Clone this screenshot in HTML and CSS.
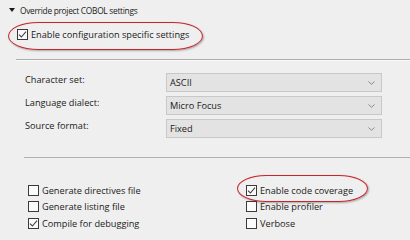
FILE: index.html
```html
<!DOCTYPE html>
<html>
<head>
<meta charset="utf-8">
<link rel="stylesheet" href="styles.css">
</head>
<body>
<div class="page">
  <div class="header">
    <svg class="tri" width="6" height="4" viewBox="0 0 6 4"><path d="M0 0H6L3 4Z" fill="#1a1a1a"/></svg>
    <span>Override project COBOL settings</span>
  </div>
  <div class="cfg">
    <label class="opt hl hl-cfg">
      <span class="cb"><svg width="9" height="9" viewBox="0 0 9 9"><path d="M1 4.6 L3.4 7 L8 1.6" fill="none" stroke="#404040" stroke-width="1.1"/></svg></span>
      <span>Enable configuration specific settings</span>
    </label>
  </div>
  <div class="group">
    <div class="form">
      <div class="lbl">Character set:</div>
      <div class="sel"><span>ASCII</span><svg class="chev" width="7" height="4" viewBox="0 0 7 4"><path d="M0.5 0.5 L3.5 3.3 L6.5 0.5" fill="none" stroke="#8a8a8a" stroke-width="1"/></svg></div>
      <div class="lbl">Language dialect:</div>
      <div class="sel"><span>Micro Focus</span><svg class="chev" width="7" height="4" viewBox="0 0 7 4"><path d="M0.5 0.5 L3.5 3.3 L6.5 0.5" fill="none" stroke="#8a8a8a" stroke-width="1"/></svg></div>
      <div class="lbl">Source format:</div>
      <div class="sel"><span>Fixed</span><svg class="chev" width="7" height="4" viewBox="0 0 7 4"><path d="M0.5 0.5 L3.5 3.3 L6.5 0.5" fill="none" stroke="#8a8a8a" stroke-width="1"/></svg></div>
    </div>
    <div class="sep"></div>
    <div class="opts">
      <label class="opt"><span class="cb"></span><span>Generate directives file</span></label>
      <label class="opt hl hl-cov"><span class="cb"><svg width="9" height="9" viewBox="0 0 9 9"><path d="M1 4.6 L3.4 7 L8 1.6" fill="none" stroke="#404040" stroke-width="1.1"/></svg></span><span>Enable code coverage</span></label>
      <label class="opt"><span class="cb"></span><span>Generate listing file</span></label>
      <label class="opt"><span class="cb"></span><span>Enable profiler</span></label>
      <label class="opt"><span class="cb"><svg width="9" height="9" viewBox="0 0 9 9"><path d="M1 4.6 L3.4 7 L8 1.6" fill="none" stroke="#404040" stroke-width="1.1"/></svg></span><span>Compile for debugging</span></label>
      <label class="opt"><span class="cb"></span><span>Verbose</span></label>
    </div>
  </div>
</div>
</body>
</html>
```
FILE: styles.css
```css
html, body {
  margin: 0;
  padding: 0;
  background: #efefef;
}
.page {
  width: 410px;
  height: 240px;
  overflow: hidden;
  font-family: "Open Sans", "Noto Sans", sans-serif;
  font-size: 9.2px;
  color: #1a1a1a;
}
.header {
  display: flex;
  align-items: center;
  height: 14px;
  padding: 3px 0 0 9px;
  font-size: 8.4px;
  letter-spacing: -0.3px;
}
.tri {
  margin-right: 5px;
}
.cfg {
  padding: 9px 0 0 17px;
  height: 42px;
  box-sizing: border-box;
}
.opt {
  display: flex;
  align-items: center;
  gap: 3px;
  height: 16px;
  position: relative;
  justify-self: start;
}
.cfg .opt {
  display: inline-flex;
}
.cb {
  width: 11px;
  height: 11px;
  box-sizing: border-box;
  border: 1px solid #3a3a3a;
  background: #fbfbfb;
  display: flex;
  align-items: center;
  justify-content: center;
  flex: none;
}
.hl::before {
  content: "";
  position: absolute;
  border: 1.6px solid #c9252b;
  border-radius: 30px / 14px;
  box-shadow: 1px 1px 2px rgba(0,0,0,0.3), inset 0 0 1px rgba(0,0,0,0.15);
  pointer-events: none;
}
.hl-cfg::before {
  left: -9px;
  right: -14px;
  top: -4px;
  bottom: -8px;
}
.hl-cov::before {
  left: -9px;
  right: -15px;
  top: -7px;
  bottom: -4px;
}
.group {
  margin-left: 16px;
  border-top: 1px solid #acacac;
  box-shadow: inset 0 1px 0 #fafafa;
  padding-top: 13px;
}
.form {
  display: grid;
  grid-template-columns: 141px 216px;
  grid-auto-rows: 19px;
  row-gap: 4px;
  padding-left: 9px;
}
.lbl {
  display: flex;
  align-items: center;
  box-sizing: border-box;
  padding-bottom: 7px;
}
.sel {
  display: flex;
  align-items: center;
  justify-content: space-between;
  background: #e3e3e3;
  border: 1px solid #c8c8c8;
  box-sizing: border-box;
  padding: 0 6px 0 3px;
}
.sep {
  margin: 19px 0 0 8px;
  border-top: 1px solid #b0b0b0;
}
.opts {
  display: grid;
  grid-template-columns: 218px auto;
  grid-auto-rows: 16.5px;
  padding: 24px 0 0 12px;
}
```
